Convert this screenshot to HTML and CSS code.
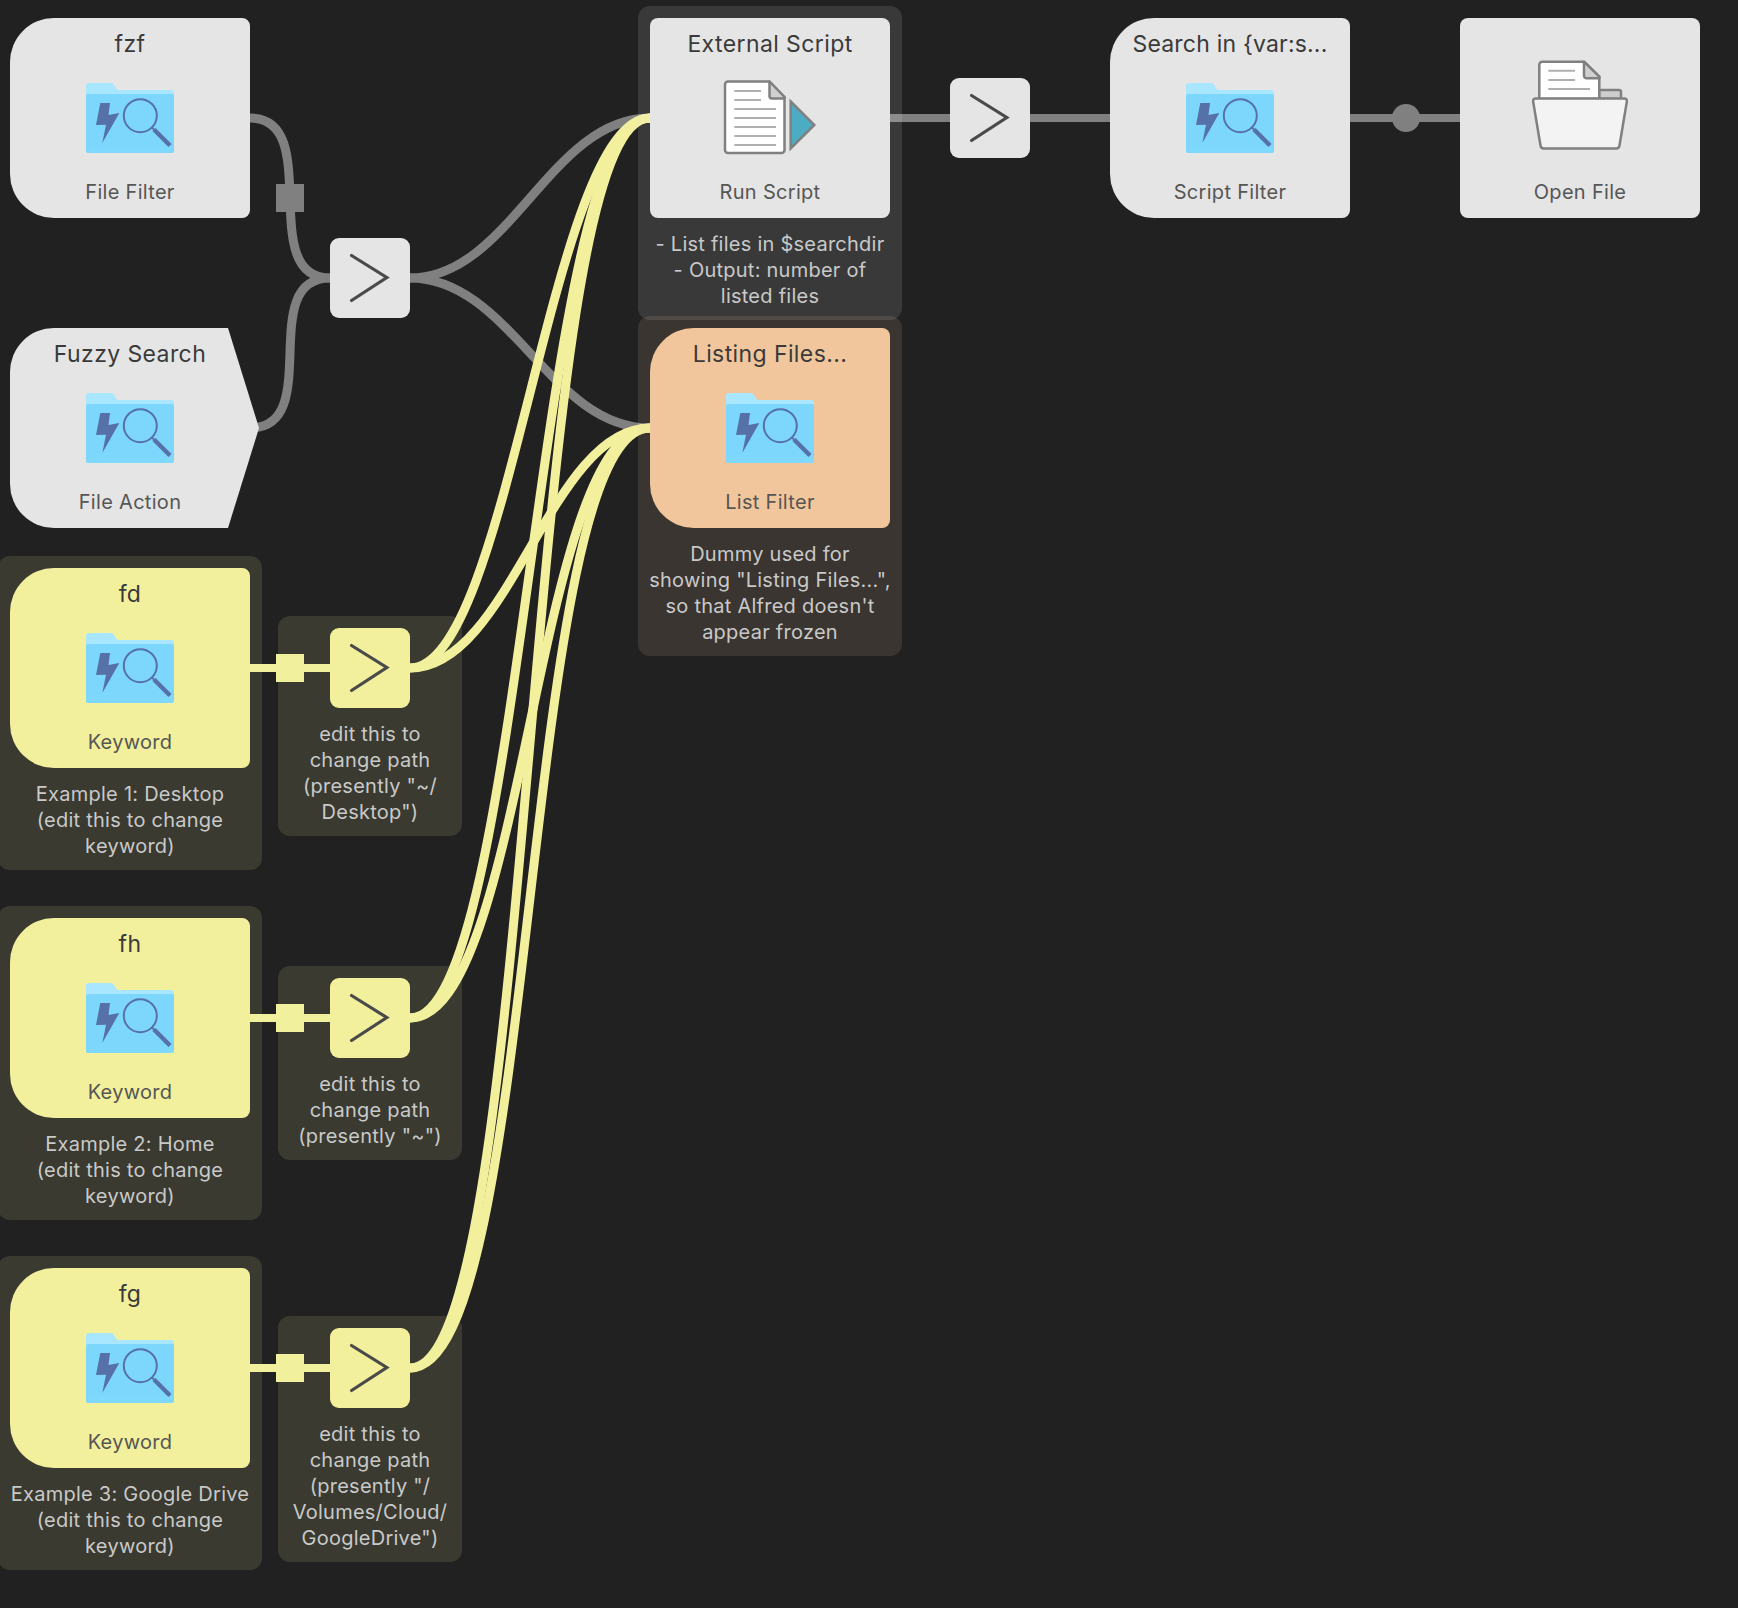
FILE: index.html
```html
<!DOCTYPE html>
<html lang="en">
<head>
<meta charset="utf-8">
<title>Alfred workflow</title>
<link rel="stylesheet" href="styles.css">
</head>
<body>
<main class="canvas">
  <svg class="defs" width="0" height="0" aria-hidden="true">
    <symbol id="folder" viewBox="0 0 120 80">
      <g transform="translate(16 5)">
        <path class="f-back" d="M0 3a3 3 0 0 1 3-3H25q2 0 3 2l2.500 4q.7 1 2 1H85a3 3 0 0 1 3 3V20H0Z"/>
        <path class="f-front" d="M0 13a2 2 0 0 1 2-2H86a2 2 0 0 1 2 2V68a2 2 0 0 1-2 2H2a2 2 0 0 1-2-2Z"/>
        <rect class="f-band" x="2" y="64" width="84" height="6"/>
        <path class="f-glyph" d="M14.300 20H24L22.500 32 33.300 30 16.300 60 20 41.700 10 42Z"/>
        <circle class="f-lens" cx="54.300" cy="32.700" r="16.500"/>
        <path class="f-stem" d="M66 44.500 68 46.500"/>
        <path class="f-handle" d="M68 46.500 84 62.500"/>
      </g>
    </symbol>
    <symbol id="chev" viewBox="0 0 80 80">
      <path class="chev-line" d="M21.500 17.500 56.800 39.500 21.500 62.500"/>
    </symbol>
  </svg>

  <svg class="wires" width="1738" height="1608" aria-hidden="true">
    <g class="wire-gray">
      <path class="curve" d="M250 118C325 118 255 278 330 278"/>
      <path class="curve" d="M250 428C325 428 255 278 330 278"/>
      <path class="curve" d="M410 278C510 278 550 118 650 118"/>
      <path class="curve" d="M410 278C510 278 550 428 650 428"/>
      <path d="M890 118H950"/>
      <path d="M1030 118H1110"/>
      <path d="M1350 118H1460"/>
    </g>
    <rect class="sq-gray" x="276" y="184" width="28" height="28"/>
    <circle class="sq-gray" cx="1406" cy="118" r="14"/>
    <g class="wire-yellow">
      <path class="curve" d="M410 668C510 668 550 118 650 118"/>
      <path class="curve" d="M410 668C510 668 550 428 650 428"/>
      <path class="curve" d="M410 1018C525 1018 535 118 650 118"/>
      <path class="curve" d="M410 1018C525 1018 535 428 650 428"/>
      <path class="curve" d="M410 1368C540 1368 520 118 650 118"/>
      <path class="curve" d="M410 1368C540 1368 520 428 650 428"/>
      <path d="M250 668H330"/>
      <path d="M250 1018H330"/>
      <path d="M250 1368H330"/>
    </g>
    <rect class="sq-yellow" x="276" y="654" width="28" height="28"/>
    <rect class="sq-yellow" x="276" y="1004" width="28" height="28"/>
    <rect class="sq-yellow" x="276" y="1354" width="28" height="28"/>
  </svg>

  <article class="node input pos-fzf">
    <h2 class="title">fzf</h2>
    <svg class="icon"><use href="#folder"/></svg>
    <p class="label">File Filter</p>
  </article>

  <article class="node action pos-fuzzy">
    <h2 class="title">Fuzzy Search</h2>
    <svg class="icon"><use href="#folder"/></svg>
    <p class="label">File Action</p>
  </article>

  <div class="cond pos-c0"><svg class="chev"><use href="#chev"/></svg></div>

  <section class="group gray pos-ext">
    <article class="node">
      <h2 class="title">External Script</h2>
      <svg class="icon" viewBox="0 0 120 80">
        <path class="doc" d="M18 3.500H59.500L74.500 19V72a3 3 0 0 1-3 3H18a3 3 0 0 1-3-3V6.500a3 3 0 0 1 3-3Z"/>
        <path class="fold" d="M59.500 3.500 74.500 19V20.500H62a2.500 2.500 0 0 1-2.500-2.500Z"/>
        <path class="rule" d="M24.300 13H51M24.300 22H51M24.300 31H66M24.300 40H66M24.300 49H66M24.300 58H66M24.300 67H66"/>
        <path class="play" d="M80.700 23.500 104.300 47 80.700 70.500Z"/>
      </svg>
      <p class="label">Run Script</p>
    </article>
    <p class="caption">- List files in $searchdir<br>- Output: number of<br>listed files</p>
  </section>

  <section class="group orange pos-list">
    <article class="node input tint-orange">
      <h2 class="title">Listing Files...</h2>
      <svg class="icon"><use href="#folder"/></svg>
      <p class="label">List Filter</p>
    </article>
    <p class="caption">Dummy used for<br>showing "Listing Files...",<br>so that Alfred doesn't<br>appear frozen</p>
  </section>

  <div class="cond pos-c1"><svg class="chev"><use href="#chev"/></svg></div>

  <article class="node input pos-sf">
    <h2 class="title title-tight">Search in {var:s...</h2>
    <svg class="icon"><use href="#folder"/></svg>
    <p class="label">Script Filter</p>
  </article>

  <article class="node pos-open">
    <h2 class="title">&nbsp;</h2>
    <svg class="icon icon-open" viewBox="0 0 120 80">
      <path class="tabfill" d="M79 12H99a2 2 0 0 1 2 2V21H79Z"/>
      <path class="doc" d="M22.300-16.300H64L79.300-1.300V21H19.300V-13.300a3 3 0 0 1 3-3Z"/>
      <path class="fold" d="M64-16.300 79.300-1.300V.3H66.500A2.500 2.500 0 0 1 64-2.200Z"/>
      <path class="rule" d="M28.300-7.300H55M28.300 2H55M28.300 11H70"/>
      <path class="bin" d="M15.500 20.500H104.500a2.500 2.500 0 0 1 2.400 2.800L99.500 67.500a3.500 3.500 0 0 1-3.500 3H24a3.500 3.500 0 0 1-3.500-3L13.100 23.300A2.500 2.500 0 0 1 15.500 20.500Z"/>
    </svg>
    <p class="label">Open File</p>
  </article>

  <section class="group yellow pos-k1">
    <article class="node input tint-yellow">
      <h2 class="title">fd</h2>
      <svg class="icon"><use href="#folder"/></svg>
      <p class="label">Keyword</p>
    </article>
    <p class="caption">Example 1: Desktop<br>(edit this to change<br>keyword)</p>
  </section>
  <section class="group yellow narrow pos-g1">
    <div class="cond tint-yellow"><svg class="chev"><use href="#chev"/></svg></div>
    <p class="caption">edit this to<br>change path<br>(presently "~/<br>Desktop")</p>
  </section>

  <section class="group yellow pos-k2">
    <article class="node input tint-yellow">
      <h2 class="title">fh</h2>
      <svg class="icon"><use href="#folder"/></svg>
      <p class="label">Keyword</p>
    </article>
    <p class="caption">Example 2: Home<br>(edit this to change<br>keyword)</p>
  </section>
  <section class="group yellow narrow pos-g2">
    <div class="cond tint-yellow"><svg class="chev"><use href="#chev"/></svg></div>
    <p class="caption">edit this to<br>change path<br>(presently "~")</p>
  </section>

  <section class="group yellow pos-k3">
    <article class="node input tint-yellow">
      <h2 class="title">fg</h2>
      <svg class="icon"><use href="#folder"/></svg>
      <p class="label">Keyword</p>
    </article>
    <p class="caption">Example 3: Google Drive<br>(edit this to change<br>keyword)</p>
  </section>
  <section class="group yellow narrow pos-g3">
    <div class="cond tint-yellow"><svg class="chev"><use href="#chev"/></svg></div>
    <p class="caption">edit this to<br>change path<br>(presently "/<br>Volumes/Cloud/<br>GoogleDrive")</p>
  </section>
</main>
</body>
</html>
```

FILE: styles.css
```css
* { box-sizing: border-box; }
html, body { margin: 0; background: #212121; }
body { font-family: Inter, "Liberation Sans", sans-serif; }

.canvas { position: relative; width: 1738px; height: 1608px; overflow: hidden; }
.defs { position: absolute; }
.wires { position: absolute; left: 0; top: 0; }

.wires path { fill: none; stroke-width: 8; }
.wires path.curve { stroke-width: 9; }
.wire-gray path { stroke: #808080; }
.wire-yellow path { stroke: #f2f09c; }
.sq-gray { fill: #808080; }
.sq-yellow { fill: #f2f09c; }

/* diagram placement */
.pos-fzf, .pos-fuzzy, .pos-sf, .pos-open, .pos-c0, .pos-c1,
.pos-ext, .pos-list, .pos-k1, .pos-k2, .pos-k3, .pos-g1, .pos-g2, .pos-g3 { position: absolute; }
.pos-fzf { left: 10px; top: 18px; }
.pos-fuzzy { left: 10px; top: 328px; }
.pos-c0 { left: 330px; top: 238px; }
.pos-ext { left: 638px; top: 6px; }
.pos-list { left: 638px; top: 316px; }
.pos-c1 { left: 950px; top: 78px; }
.pos-sf { left: 1110px; top: 18px; }
.pos-open { left: 1460px; top: 18px; }
.pos-k1 { left: -2px; top: 556px; }
.pos-k2 { left: -2px; top: 906px; }
.pos-k3 { left: -2px; top: 1256px; }
.pos-g1 { left: 278px; top: 616px; }
.pos-g2 { left: 278px; top: 966px; }
.pos-g3 { left: 278px; top: 1316px; }

/* nodes */
.node {
  display: flex;
  flex-direction: column;
  align-items: center;
  width: 240px;
  height: 200px;
  padding-top: 12px;
  background: #e5e5e5;
  border-radius: 8px;
}
.node.input { border-radius: 44px 8px 8px 44px; }
.node.action {
  width: 250px;
  padding-right: 10px;
  border-radius: 0;
  clip-path: path("M44 0H218L249 100 218 200H44A44 44 0 0 1 0 156V44A44 44 0 0 1 44 0Z");
}
.tint-yellow { background: #f2f09c; }
.tint-orange { background: #f2c69c; }

.title {
  margin: 0;
  font-size: 23px;
  font-weight: 400;
  letter-spacing: 0.4px;
  line-height: 28px;
  color: #3a3a3a;
  white-space: nowrap;
}
.title-tight { letter-spacing: 0.2px; }
.icon { display: block; width: 120px; height: 80px; margin-top: 20px; flex: none; overflow: visible; }
.label {
  margin: 22px 0 0;
  font-size: 20px;
  letter-spacing: 0.3px;
  line-height: 24px;
  color: #565656;
  white-space: nowrap;
}

/* condition boxes */
.cond {
  width: 80px;
  height: 80px;
  flex: none;
  background: #e5e5e5;
  border-radius: 9px;
}
.cond.tint-yellow { background: #f2f09c; }
.chev { display: block; width: 80px; height: 80px; }
.chev-line { fill: none; stroke: #4a4a4a; stroke-width: 3.200; stroke-linecap: round; stroke-linejoin: miter; }

/* groups */
.group {
  display: flex;
  flex-direction: column;
  align-items: center;
  width: 264px;
  padding: 12px 12px 11px;
  border-radius: 12px;
}
.group.narrow { width: 184px; }
.gray { background: rgba(229, 229, 229, 0.125); }
.yellow { background: rgba(242, 240, 156, 0.125); }
.orange { background: rgba(242, 198, 156, 0.125); }
.caption {
  margin: 13px 0 0;
  font-size: 20px;
  letter-spacing: 0.25px;
  line-height: 26px;
  text-align: center;
  color: #c9c9c9;
  white-space: nowrap;
}

/* folder icon */
.f-back { fill: #a9e6ff; }
.f-front { fill: #7dd6fc; }
.f-band { fill: #7fd9ff; }
.f-glyph { fill: #5571a8; }
.f-lens { fill: none; stroke: #5571a8; stroke-width: 2; }
.f-stem { stroke: #5571a8; stroke-width: 2; fill: none; }
.f-handle { stroke: #5571a8; stroke-width: 4.500; fill: none; }

/* document icons */
.doc { fill: #fff; stroke: #808080; stroke-width: 2.500; stroke-linejoin: round; }
.fold { fill: #d0d0d0; stroke: #808080; stroke-width: 2.500; stroke-linejoin: round; }
.rule { fill: none; stroke: #b0b0b0; stroke-width: 2; }
.play { fill: #4bacc3; stroke: #808080; stroke-width: 2.500; }
.tabfill { fill: #cdcdcd; stroke: #808080; stroke-width: 2.500; stroke-linejoin: round; }
.bin { fill: #f3f3f3; stroke: #808080; stroke-width: 2.500; stroke-linejoin: round; }
```
